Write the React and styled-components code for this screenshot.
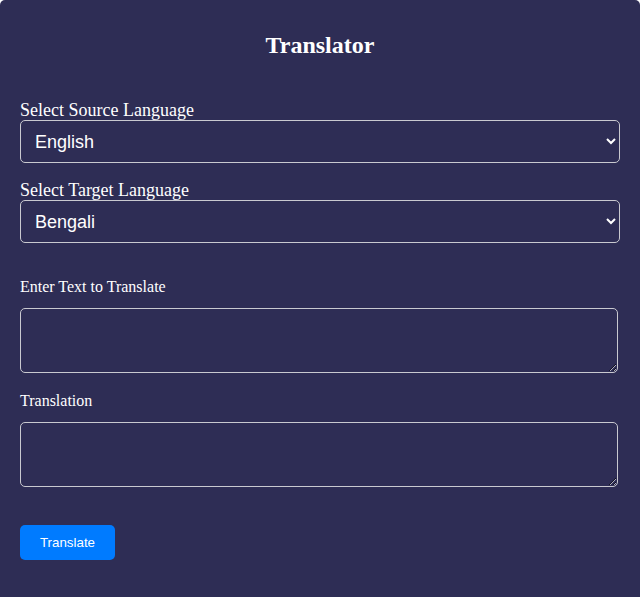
import React from "react";
import styled, { createGlobalStyle } from "styled-components";

const GlobalStyle = createGlobalStyle`
  html, body {
    margin: 0;
    padding: 0;
    background: #ffffff;
  }
  body {
    font-family: "Liberation Serif", "Times New Roman", serif;
  }
`;

const Card = styled.div`
  box-sizing: border-box;
  width: 640px;
  min-height: 610px;
  padding: 31px 20px 40px;
  background: #2e2d55;
  border-radius: 5px;
  color: #ffffff;
`;

const Title = styled.h2`
  margin: 0 0 40px;
  font-family: "Liberation Serif", "Times New Roman", serif;
  font-size: 24px;
  font-weight: bold;
  text-align: center;
  line-height: 28px;
`;

const SelectLabel = styled.label`
  display: block;
  font-family: "Liberation Serif", "Times New Roman", serif;
  font-size: 18px;
  line-height: 22px;
  height: 21px;
`;

const Select = styled.select`
  display: block;
  box-sizing: border-box;
  width: 100%;
  height: 43px;
  margin: 0 0 ${(p) => p.$gap}px;
  padding: 0 10px;
  background: transparent;
  color: #ffffff;
  border: 1px solid #c9c9d0;
  border-radius: 5px;
  font-family: "Liberation Sans", Arial, sans-serif;
  font-size: 18px;
  outline: none;

  option {
    color: #000000;
    background: #ffffff;
  }
`;

const TextLabel = styled.label`
  display: block;
  margin: 0 0 12px;
  font-family: "Liberation Serif", "Times New Roman", serif;
  font-size: 16px;
  line-height: 18px;
`;

const TextArea = styled.textarea`
  display: block;
  box-sizing: border-box;
  width: 598px;
  height: 65px;
  margin: 0 0 ${(p) => p.$gap}px;
  padding: 8px;
  background: transparent;
  color: #ffffff;
  border: 1px solid #c9c9d0;
  border-radius: 5px;
  font-family: "Liberation Sans", Arial, sans-serif;
  font-size: 14px;
  outline: none;
`;

const Button = styled.button`
  display: block;
  box-sizing: border-box;
  width: 95px;
  height: 35px;
  padding: 0;
  background: #007bff;
  color: #ffffff;
  border: none;
  border-radius: 5px;
  font-family: "Liberation Sans", Arial, sans-serif;
  font-size: 13.33px;
  cursor: pointer;
`;

const languages = [
  "English",
  "Bengali",
  "Hindi",
  "Spanish",
  "French",
  "German",
  "Chinese",
  "Japanese",
];

export default function App() {
  return (
    <>
      <GlobalStyle />
      <Card>
        <Title>Translator</Title>
        <SelectLabel htmlFor="src">Select Source Language</SelectLabel>
        <Select id="src" defaultValue="English" $gap={16}>
          {languages.map((l) => (
            <option key={l} value={l}>
              {l}
            </option>
          ))}
        </Select>
        <SelectLabel htmlFor="tgt">Select Target Language</SelectLabel>
        <Select id="tgt" defaultValue="Bengali" $gap={35}>
          {languages.map((l) => (
            <option key={l} value={l}>
              {l}
            </option>
          ))}
        </Select>
        <TextLabel htmlFor="input">Enter Text to Translate</TextLabel>
        <TextArea id="input" $gap={19} />
        <TextLabel htmlFor="output">Translation</TextLabel>
        <TextArea id="output" readOnly $gap={38} />
        <Button type="button">Translate</Button>
      </Card>
    </>
  );
}
